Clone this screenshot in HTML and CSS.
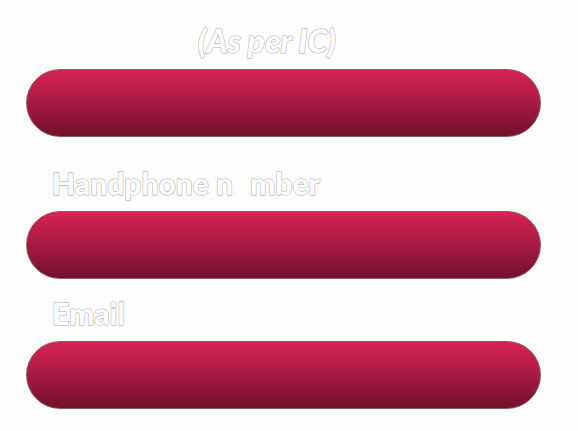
FILE: index.html
```html
<!DOCTYPE html>
<html lang="en">
<head>
<meta charset="utf-8">
<meta name="viewport" content="width=device-width, initial-scale=1">
<title>Contact details</title>
<link rel="stylesheet" href="styles.css">
</head>
<body>
<form class="form">
  <div class="field">
    <label class="label label-note" for="name">(As per IC)</label>
    <input class="input" id="name" type="text">
  </div>
  <div class="field field-spaced">
    <label class="label" for="phone">Handphone n<span class="faded">u</span>mber</label>
    <input class="input" id="phone" type="tel">
  </div>
  <div class="field">
    <label class="label" for="email">Email</label>
    <input class="input" id="email" type="email">
  </div>
</form>
</body>
</html>
```
FILE: styles.css
```css
* {
  box-sizing: border-box;
}

body {
  margin: 0;
  background: #fefefe;
  font-family: Lato, "Liberation Sans", sans-serif;
}

.form {
  display: flex;
  flex-direction: column;
  gap: 16px;
  padding: 23px 37px 16px 26px;
}

.field {
  display: flex;
  flex-direction: column;
  gap: 10px;
}

.field-spaced {
  padding-top: 12px;
}

.label {
  padding-left: 26px;
  font-size: 30px;
  font-weight: 900;
  line-height: 36px;
  color: #fefefe;
  -webkit-text-stroke: 1px #a8a8a8;
  paint-order: stroke fill;
}

.label-note {
  padding-left: 172px;
  font-size: 32px;
  font-style: italic;
}

.faded {
  -webkit-text-stroke-color: #f8f8f8;
}

.input {
  width: 100%;
  height: 68px;
  padding: 0 32px;
  border: 1px solid #8c5c68;
  border-radius: 34px;
  background: linear-gradient(#d92454, #a61a42 50%, #70102c) border-box;
  color: #fff;
  font: inherit;
  font-size: 24px;
}
```
